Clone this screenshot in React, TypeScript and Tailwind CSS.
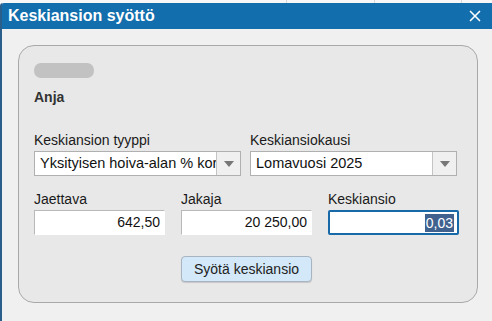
import { X } from 'lucide-react';

function Field({ label, value, focused }: { label: string; value: string; focused?: boolean }) {
  return (
    <div className="flex flex-col w-[131px]">
      <span className="text-[14px] leading-[16px] text-[#1a1a1a] mb-[3px]">{label}</span>
      <div
        className={
          focused
            ? 'h-[25px] bg-white border-2 border-[#1769a8] rounded-[2px] flex items-center justify-end pr-[3px]'
            : 'h-[25px] bg-white border border-[#b8b8b8] border-b-white border-r-white flex items-center justify-end pr-[4px]'
        }
      >
        {focused ? (
          <span className="text-[14px] leading-[18px] bg-[#41618f] text-white px-[1px]">{value}</span>
        ) : (
          <span className="text-[14px] text-[#111]">{value}</span>
        )}
      </div>
    </div>
  );
}

function SelectBox({ label, value }: { label: string; value: string }) {
  return (
    <div className="flex flex-col w-[207px]">
      <span className="text-[14px] leading-[16px] text-[#1a1a1a] mb-[3px]">{label}</span>
      <div className="h-[25px] bg-white border border-[#b0b0b0] flex items-stretch">
        <span className="flex-1 overflow-hidden whitespace-nowrap text-[14.5px] leading-[23px] pl-[5px] text-[#111]">
          {value}
        </span>
        <div className="w-[24px] bg-[#f0f0f0] border-l border-[#c4c4c4] flex items-center justify-center">
          <svg width="10" height="6" viewBox="0 0 10 6">
            <path d="M0 0 L10 0 L5 6 Z" fill="#777" />
          </svg>
        </div>
      </div>
    </div>
  );
}

export default function App() {
  return (
    <div className="w-[492px] h-[321px] bg-[#f7f7f7] overflow-hidden flex flex-col font-['Liberation_Sans',Arial,sans-serif]">
      <div className="h-[3px] flex shrink-0">
        <div className="w-[287px] border-r border-[#d8d8d8]" />
        <div className="w-[88px] border-r border-[#d8d8d8]" />
        <div className="w-[87px] border-r border-[#d8d8d8]" />
      </div>
      <div className="flex-1 flex flex-col border-l-2 border-[#2a5f8c] rounded-tl-[3px] bg-[#f0f0f0]">
        <div className="h-[26px] bg-[#126eac] flex items-center justify-between pl-[6px] pr-[8px] rounded-tl-[2px]">
          <h1 className="text-white font-bold text-[16px] leading-[18px]">Keskiansion syöttö</h1>
          <X className="w-[18px] h-[18px] text-white" strokeWidth={2.2} />
        </div>
        <div className="pt-[16px] pl-[16px] pr-[14px]">
          <div className="h-[258px] bg-[#e8e8e8] border border-[#a9a9a9] rounded-[16px] pl-[15px] pt-[17px] flex flex-col">
            <div className="w-[60px] h-[15px] rounded-[7px] bg-[#c2c2c2]" />
            <div className="mt-[11px] text-[14px] font-bold text-[#333] leading-[16px]">Anja</div>
            <div className="mt-[27px] flex gap-[9px]">
              <SelectBox label="Keskiansion tyyppi" value="Yksityisen hoiva-alan % korvaus" />
              <SelectBox label="Keskiansiokausi" value="Lomavuosi 2025" />
            </div>
            <div className="mt-[15px] flex gap-[16px]">
              <Field label="Jaettava" value="642,50" />
              <Field label="Jakaja" value="20 250,00" />
              <Field label="Keskiansio" value="0,03" focused />
            </div>
            <div className="mt-[21px] pl-[147px]">
              <button className="w-[131px] h-[26px] bg-[#d3e8f8] border border-[#a8b4bf] rounded-[4px] text-[14px] text-[#222] shadow-[0_1px_1px_rgba(0,0,0,0.15)]">
                Syötä keskiansio
              </button>
            </div>
          </div>
        </div>
      </div>
    </div>
  );
}
